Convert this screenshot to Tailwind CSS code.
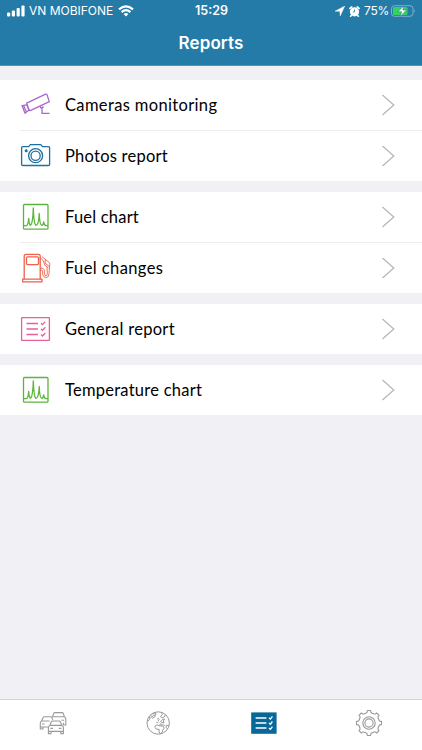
<!DOCTYPE html>
<html lang="en">
<head>
  <meta charset="UTF-8" />
  <meta name="viewport" content="width=device-width, initial-scale=1" />
  <title>Reports</title>
  <script src="https://cdn.jsdelivr.net/npm/@tailwindcss/browser@4"></script>
</head>
<body class="h-screen flex flex-col overflow-hidden bg-[#f0f0f5] font-['Lato',sans-serif] text-black">

  <!-- shared icons -->
  <svg class="hidden">
    <symbol id="chart" viewBox="0 0 32 32">
      <rect x="3.5" y="3.5" width="24.5" height="24.7" rx="1" />
      <path d="M3.5 24.7H6.4Q8.2 24.4 8.7 17.4Q9.2 24 10.4 24.3Q12.8 23 13.3 6.9Q13.9 23 15.8 24.4Q18.8 24 19.2 12.5Q19.7 24 21.8 24.4Q23.2 24.2 23.7 20.9Q24.2 24.5 26 24.7H28" />
    </symbol>
    <symbol id="chevron" viewBox="0 0 14 22">
      <path d="M1.5 1L12.8 11L1.5 21" />
    </symbol>
  </svg>

  <header class="h-[66px] shrink-0 bg-[#247ba8] border-b border-[#4f94b8] text-white font-['Inter',sans-serif]">
    <!-- status bar -->
    <div class="grid grid-cols-3 items-center h-[22px] pl-[7px] pr-[6px] text-[12.5px]">
      <div class="flex items-center whitespace-nowrap">
        <svg class="w-[18px] h-[12px]" viewBox="0 0 18 12" fill="currentColor">
          <rect x="0" y="7.5" width="3.2" height="4" rx="1" />
          <rect x="4.8" y="5.5" width="3.2" height="6" rx="1" />
          <rect x="9.6" y="3" width="3.2" height="8.5" rx="1" />
          <rect x="14.4" y="0.5" width="3.2" height="11" rx="1" />
        </svg>
        <span class="ml-[4px] w-[84px] text-[12px]">VN MOBIFONE</span>
        <svg class="ml-[5px] w-[16px] h-[12px] shrink-0" viewBox="0 0 16 12" fill="none" stroke="currentColor" stroke-width="2.1">
          <path d="M1 4.4Q8-1.8 15 4.4" />
          <path d="M3.6 7.1Q8 3.2 12.4 7.1" />
          <path d="M8 11.5L5.6 9.1Q8 7.1 10.4 9.1Z" fill="currentColor" stroke="none" />
        </svg>
      </div>
      <div class="text-center text-[12.5px] font-semibold">15:29</div>
      <div class="flex items-center justify-end">
        <svg class="w-[10px] h-[10px]" viewBox="0 0 10 10" fill="currentColor"><path d="M0 5.2L9.8 0L5.2 10L4.8 5.3Z" stroke="currentColor" stroke-width="0.4" /></svg>
        <svg class="ml-[4px] w-[11px] h-[11px]" viewBox="0 0 11 11">
          <circle cx="5.5" cy="5.8" r="4.6" fill="currentColor" />
          <path d="M0.9 2.4L2.8 0.9M10.1 2.4L8.2 0.9M2.4 9.3L1.6 10.4M8.6 9.3L9.4 10.4" stroke="currentColor" stroke-width="1.6" stroke-linecap="round" />
          <path d="M5.5 3.4V6H3.8" fill="none" stroke="#247ba8" stroke-width="0.8" />
        </svg>
        <span class="ml-[4px] w-[25px] text-[12px] tracking-[-0.2px]">75%</span>
        <svg class="ml-[2px] w-[25px] h-[12px]" viewBox="0 0 25 12">
          <rect x="0.5" y="0.7" width="21.5" height="10.6" rx="3" fill="none" stroke="#7fb2cd" />
          <rect x="1.9" y="2.1" width="14.6" height="7.8" rx="1.5" fill="#35d35c" />
          <path d="M23.2 4.2V7.8Q24.8 6 23.2 4.2Z" fill="#7fb2cd" />
          <path d="M12.8 0.8L6.8 6.8H10.6L9.2 11.4L15.6 5H11.9Z" fill="#fff" stroke="#247ba8" stroke-width="0.6" />
        </svg>
      </div>
    </div>
    <h1 class="h-[43px] flex items-center justify-center text-[17px] font-semibold tracking-[0.1px]">Reports</h1>
  </header>

  <main class="flex-1 pt-[14px] text-[16.5px]">
    <section class="bg-white mb-[11px]">
      <a class="flex items-center h-[50px] pl-5 pr-[27px]">
        <svg class="w-8 h-8" viewBox="0 0 32 32" fill="none" stroke="#ab68cc" stroke-width="1.3" stroke-linejoin="round">
          <path d="M6.7 14.2L25.6 5.2Q26.6 4.8 27 5.8L29.3 12.6L10.2 21.6Q9.4 21.9 9 21Z" />
          <path d="M2 16.6L6.7 15.8L9.1 21L5 24.2ZM3.6 16.4L6.4 23" />
          <path d="M20.2 17.2L20.6 18.8L23 18.4V17.2M22 18.8V24.4H29.6" />
        </svg>
        <span class="ml-[13px] tracking-[0.35px]">Cameras monitoring</span>
        <svg class="ml-auto w-[14px] h-[22px]" fill="none" stroke="#b5b5b5" stroke-width="1.2"><use href="#chevron" /></svg>
      </a>
      <div class="ml-5 h-px bg-[#ececf0]"></div>
      <a class="flex items-center h-[50px] pl-5 pr-[27px]">
        <svg class="w-8 h-8" viewBox="0 0 32 32" fill="none" stroke="#1b70a5" stroke-width="1.3" stroke-linejoin="round">
          <path d="M2.7 6.6H8.6L10.4 4.6H20.8L22.6 6.6H28.4Q29.6 6.6 29.6 7.8V24.4Q29.6 25.5 28.4 25.5H2.7Q1.6 25.5 1.6 24.4V7.8Q1.6 6.6 2.7 6.6Z" />
          <circle cx="15.6" cy="15.7" r="7" />
          <circle cx="15.6" cy="15.7" r="4.6" />
          <circle cx="6.2" cy="10.7" r="0.9" fill="#1b70a5" />
        </svg>
        <span class="ml-[13px] tracking-[0.25px]">Photos report</span>
        <svg class="ml-auto w-[14px] h-[22px]" fill="none" stroke="#b5b5b5" stroke-width="1.2"><use href="#chevron" /></svg>
      </a>
    </section>

    <section class="bg-white mb-[11px]">
      <a class="flex items-center h-[50px] pl-5 pr-[27px]">
        <svg class="w-8 h-8" fill="none" stroke="#5cb53c" stroke-width="1.3" stroke-linejoin="round"><use href="#chart" /></svg>
        <span class="ml-[13px] tracking-[0.2px]">Fuel chart</span>
        <svg class="ml-auto w-[14px] h-[22px]" fill="none" stroke="#b5b5b5" stroke-width="1.2"><use href="#chevron" /></svg>
      </a>
      <div class="ml-5 h-px bg-[#ececf0]"></div>
      <a class="flex items-center h-[50px] pl-5 pr-[27px]">
        <svg class="w-8 h-8" viewBox="0 0 32 32" fill="none" stroke="#ee614c" stroke-width="1.3" stroke-linejoin="round">
          <path d="M4.2 27.2V4.2Q4.2 2.4 6 2.4H18.4Q20.2 2.4 20.2 4.2V27.2" />
          <rect x="6.5" y="4.8" width="12" height="7.8" rx="1" />
          <rect x="2.6" y="27.2" width="19.4" height="2.6" />
          <path d="M20.2 17.8Q22.6 17.4 22.6 20V22.2Q23.2 25.6 26.2 25.6Q29 25.4 29 21.6L29.8 12Q29.8 11 29 10.3L22 4.8M20.4 6.2L23.2 8.4L24.8 13.2L28.4 15.8M20.2 16.2Q24.4 15.8 24.4 19V22Q25 23.8 26.2 23.8Q27.4 23.6 27.3 21.6L27 15M25.4 8L25 11.2L29 14.2" stroke-width="0.9" />
        </svg>
        <span class="ml-[13px] tracking-[0.4px]">Fuel changes</span>
        <svg class="ml-auto w-[14px] h-[22px]" fill="none" stroke="#b5b5b5" stroke-width="1.2"><use href="#chevron" /></svg>
      </a>
    </section>

    <section class="bg-white mb-[11px]">
      <a class="flex items-center h-[50px] pl-5 pr-[27px]">
        <svg class="w-8 h-8" viewBox="0 0 32 32" fill="none" stroke="#e8629a" stroke-width="1.3">
          <rect x="1.6" y="4.6" width="27.8" height="22.8" rx="0.5" />
          <path d="M6.5 10.5H18M6.5 16H18M6.5 21.5H18M21 10.2L22.5 11.6L25.3 8.6M21 15.9L22.5 17.3L25.3 14.3M21 21.6L22.5 23L25.3 20" />
        </svg>
        <span class="ml-[13px] tracking-[0.3px]">General report</span>
        <svg class="ml-auto w-[14px] h-[22px]" fill="none" stroke="#b5b5b5" stroke-width="1.2"><use href="#chevron" /></svg>
      </a>
    </section>

    <section class="bg-white">
      <a class="flex items-center h-[50px] pl-5 pr-[27px]">
        <svg class="w-8 h-8" fill="none" stroke="#5cb53c" stroke-width="1.3" stroke-linejoin="round"><use href="#chart" /></svg>
        <span class="ml-[13px] tracking-[0.25px]">Temperature chart</span>
        <svg class="ml-auto w-[14px] h-[22px]" fill="none" stroke="#b5b5b5" stroke-width="1.2"><use href="#chevron" /></svg>
      </a>
    </section>
  </main>

  <!-- tab bar -->
  <nav class="h-[51px] shrink-0 grid grid-cols-4 items-center justify-items-center bg-white border-t border-[#d5d5d9] pb-[4px]">
    <svg class="w-7 h-7" viewBox="0 0 28 28" fill="none" stroke="#999" stroke-width="1.1" stroke-linejoin="round">
      <path d="M13.4 7.8L14.6 4.6Q15 3.6 16 3.6H23Q24 3.6 24.4 4.6L25.4 7.8Q26.8 8.6 26.8 10V16H24.4V13.8M13.4 7.8H25.4M22.5 11.2H25.2" />
      <path d="M2.6 12L4 8.8Q4.4 7.8 5.4 7.8H11.6Q12.6 7.8 13 8.8L13.8 10.8M2.6 12H10.6M2.6 12Q1.3 12.8 1.3 14.2V20H4V18H9M3 15H5.6M4 18H1.5" />
      <path d="M10.8 16.4L12.2 13Q12.6 12 13.6 12H20Q21 12 21.4 13L22.8 16.4Q24.4 17.2 24.4 18.6V24.6H21.8V22.4H12V24.6H9.4V18.6Q9.4 17.2 10.8 16.4ZM10.8 16.4H22.8M11.4 19.4H14M19.8 19.4H22.4M9.4 22.4H12M21.8 22.4H24.4" />
    </svg>
    <svg class="w-7 h-7" viewBox="0 0 28 28" fill="none" stroke="#999" stroke-width="1" stroke-linejoin="round">
      <circle cx="14.2" cy="14" r="11.2" />
      <path d="M4.6 8.8L6.2 8.4L5.6 10.6L3.8 12M6.4 6.6L8.6 7.6L9.6 6L11.2 6.4L10.6 8.2L8.4 9.2L7.4 8.4M8.6 5L10.2 4.2L12 4.6L11.4 6.4" />
      <path d="M17.8 3.6L18.2 5.6L16.4 7.6L18.2 8.8L20.4 7.8L21.4 6M13.2 10L14.4 9.4L15.2 10.8L14 12M16 13.4L18.6 10.4L20.6 10L19.4 12L20 13.8L18 13.6L16.6 14.6M12.4 13.4H14.4M15.2 16L18.4 15.8L20.8 16.4" />
      <path d="M11 17.2L13 15.8L15.4 16.8L18.8 17L20.2 19.2L18.6 21.2L18.2 23.4L16.2 24.8L15 22.6L15.2 20.4L12.2 20L11 18.4ZM25 16.6L22.4 16.2L22 18.2L23.4 19.8" />
    </svg>
    <svg class="w-7 h-7" viewBox="0 0 28 28" fill="none" stroke="#fff" stroke-width="1.3">
      <rect x="1.2" y="3.4" width="25.4" height="21.4" fill="#08689a" stroke="none" />
      <path d="M5.6 9H16.4M5.6 14H16.4M5.6 19H16.4M19 8.8L20.4 10.1L22.4 7.4M19 13.9L20.4 15.2L22.4 12.5M19 19L20.4 20.3L22.4 17.6" />
    </svg>
    <svg class="w-7 h-7" viewBox="0 0 28 28" fill="none" stroke="#999" stroke-width="1.1" stroke-linejoin="round">
      <path id="gear" d="" />
      <circle cx="14" cy="14" r="6.2" />
      <circle cx="14" cy="14" r="4.1" />
    </svg>
  </nav>

  <script>
    // gear outline: eight short teeth around the centre
    const pts = [];
    for (let i = 0; i < 8; i++) {
      [[-15, 10.4], [-10, 10.9], [-7.5, 12.6], [7.5, 12.6], [10, 10.9], [15, 10.4]].forEach(([off, r]) => {
        const a = (i * 45 + off) * Math.PI / 180;
        pts.push((14 + r * Math.cos(a)).toFixed(2) + " " + (14 + r * Math.sin(a)).toFixed(2));
      });
    }
    document.getElementById("gear").setAttribute("d", "M" + pts.join("L") + "Z");
  </script>
</body>
</html>
